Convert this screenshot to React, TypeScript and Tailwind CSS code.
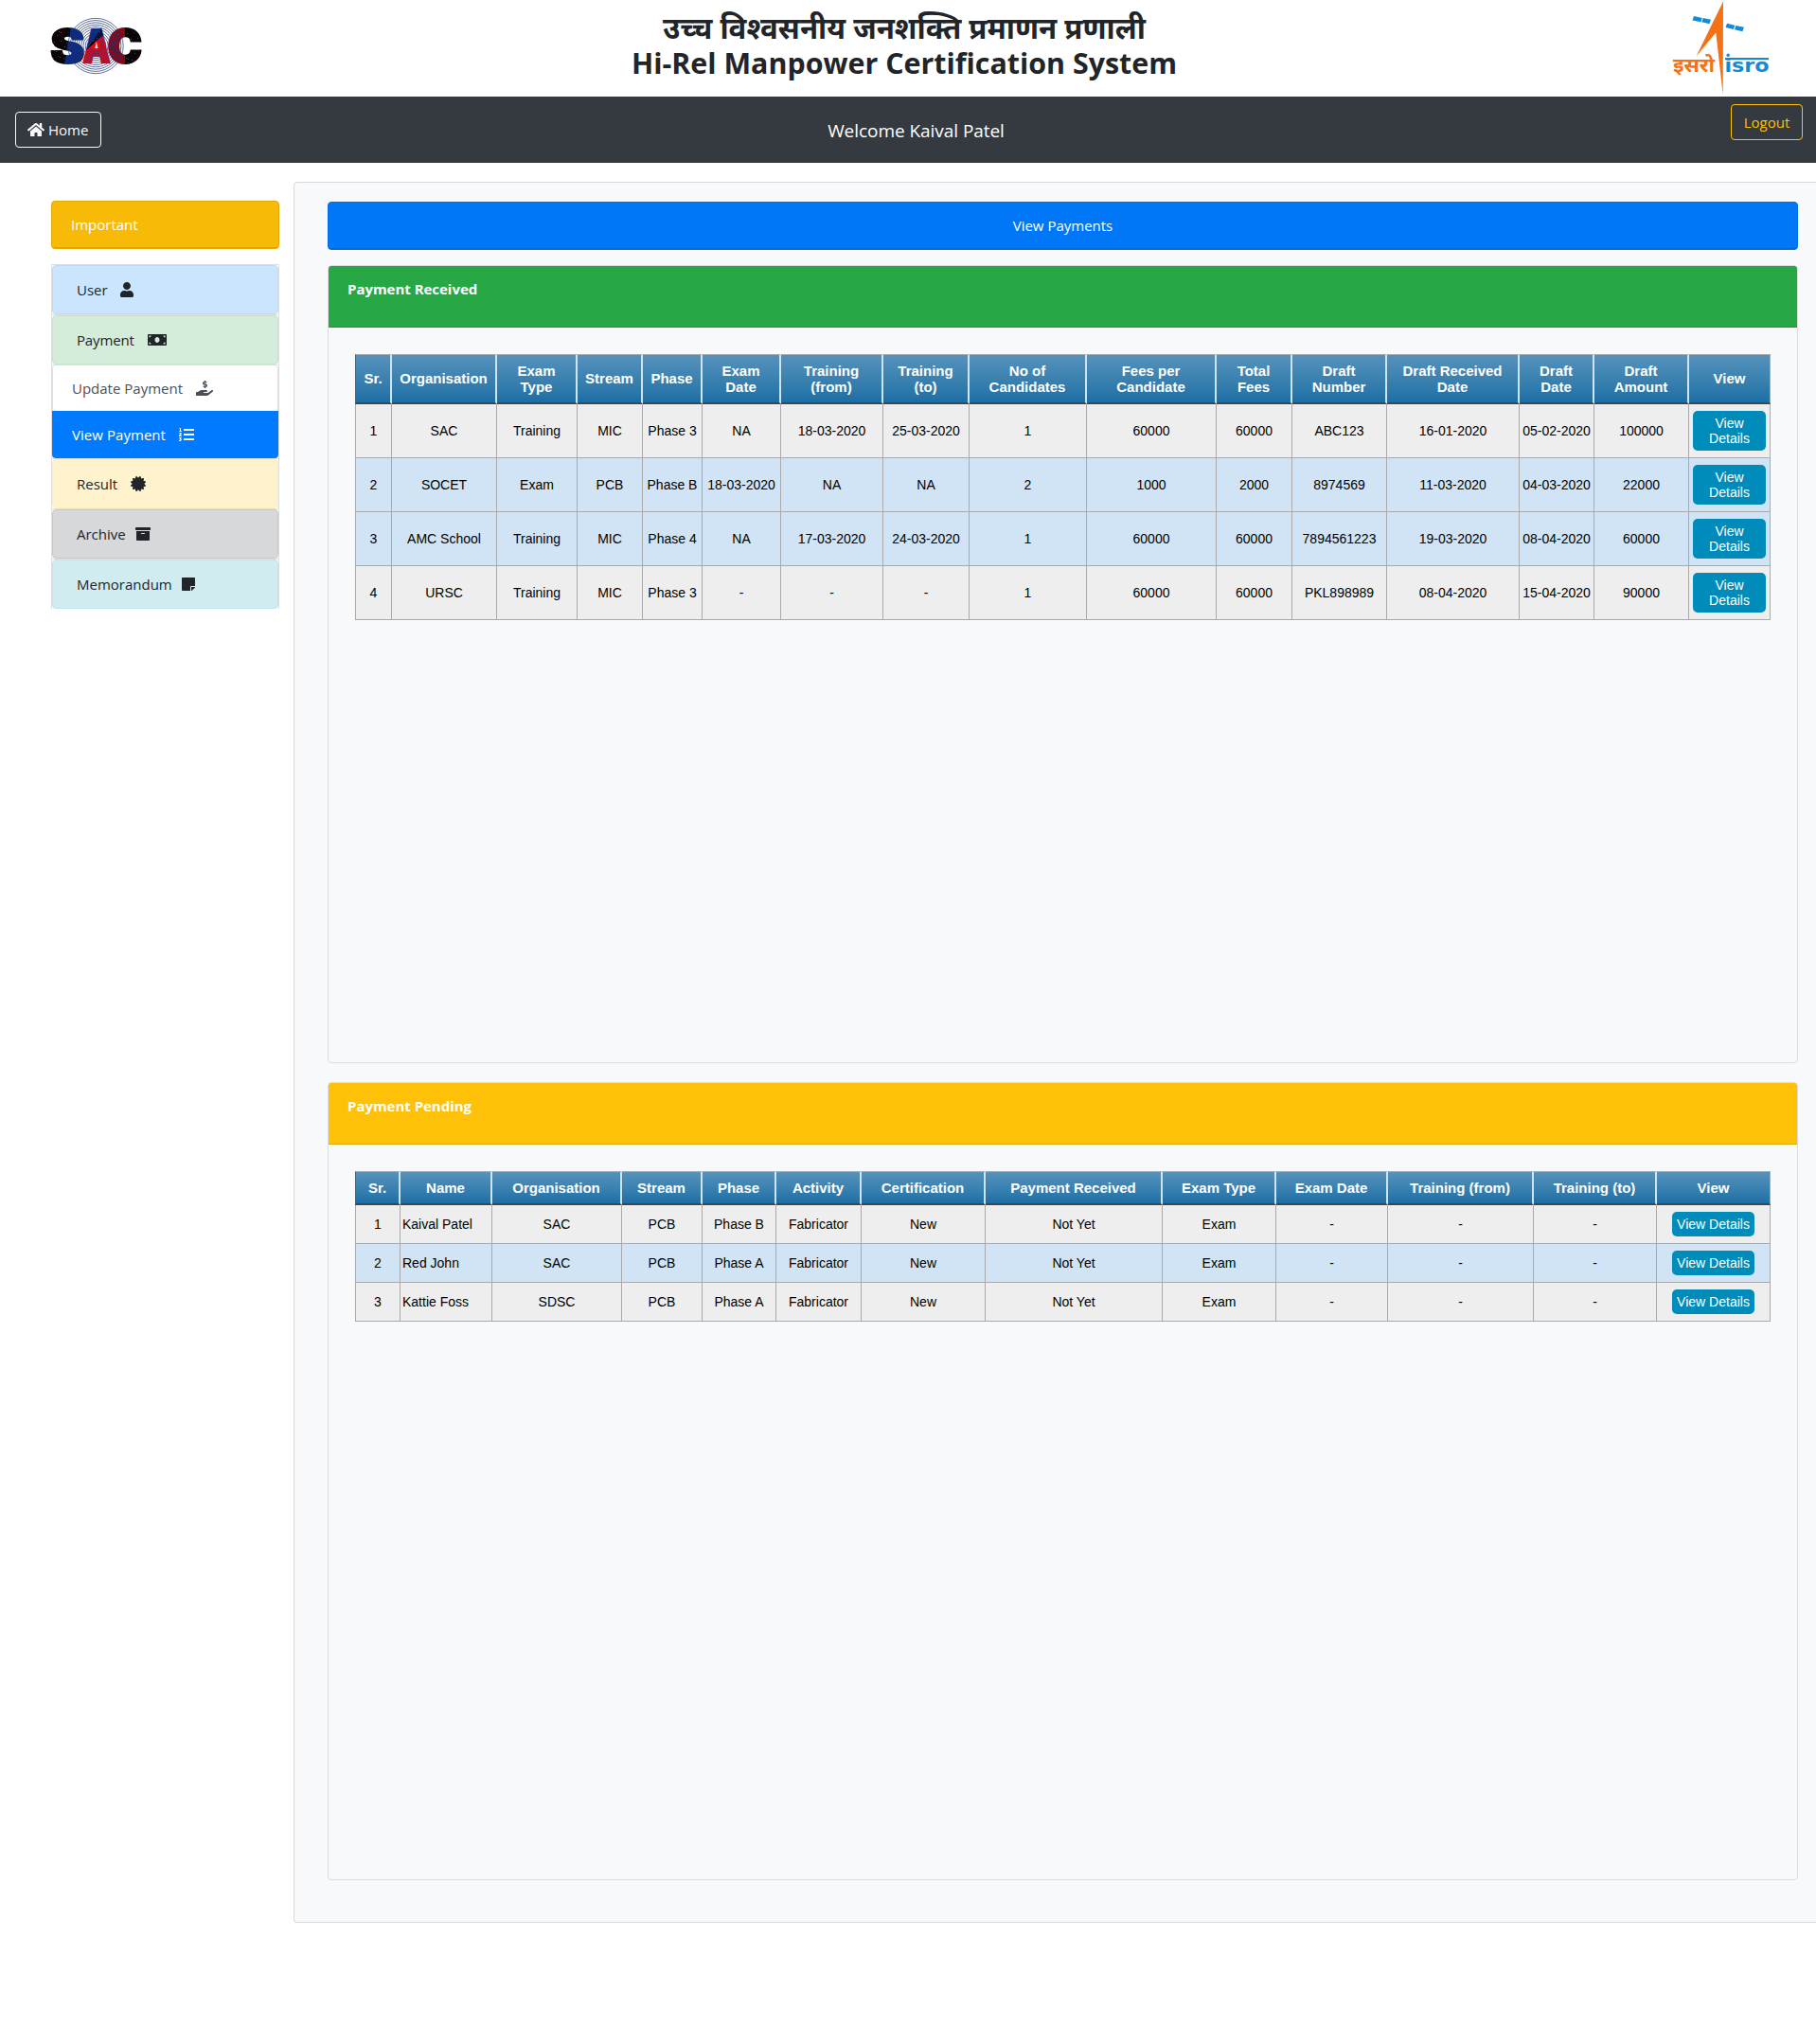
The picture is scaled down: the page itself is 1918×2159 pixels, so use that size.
import { FaHome, FaUser, FaMoneyBill, FaHandHoldingUsd, FaListOl, FaCertificate, FaArchive, FaStickyNote } from "react-icons/fa";
import type { ReactNode } from "react";

const specks = Array.from({ length: 150 }, (_, i) => ({
  x: (i * 37) % 100,
  y: 13 + ((i * 23 + Math.floor(i / 7) * 5) % 39),
  c: ["#8e1a1c", "#2c4a48", "#c0181c", "#262b33", "#3c5a50"][i % 5],
}));

function SacLogo() {
  const radii = [29.2, 26.9, 24.6, 22.3, 20, 17.7, 15.4, 13.1, 10.8, 8.5, 6.2];
  return (
    <svg className="mt-4 h-[66px] w-[100px]" viewBox="0 0 100 66">
      <defs>
        <pattern id="sacFill" width="100" height="66" patternUnits="userSpaceOnUse">
          <rect width="100" height="66" fill="#0a0507" />
          {specks.map((s, i) => (
            <rect key={i} x={s.x} y={s.y} width="1" height="1" fill={s.c} />
          ))}
          <path d="M25 13 L58 13 L40 38 L32 52 L18 52 Z" fill="#0a2f92" fillOpacity="0.9" />
          <path d="M58 22 L40 38 L34 52 L68 52 L60 24 Z" fill="#e0091a" />
          <path d="M62 12 H82 V52 H66 Z" fill="#b00816" fillOpacity="0.75" />
        </pattern>
      </defs>
      <g fontFamily="Inter, sans-serif" fontWeight="900" fontSize="48" strokeWidth="2" fill="url(#sacFill)" stroke="url(#sacFill)">
        <text x="3.200" y="50" textLength="36" lengthAdjust="spacingAndGlyphs">S</text>
        <text x="37.500" y="50" textLength="29" lengthAdjust="spacingAndGlyphs">A</text>
        <text x="63.500" y="50" textLength="36.500" lengthAdjust="spacingAndGlyphs">C</text>
      </g>
      <g fill="none" stroke="#1c3076" strokeWidth="0.7">
        {radii.map((r) => (
          <circle key={r} cx="51" cy="32.500" r={r} />
        ))}
      </g>
    </svg>
  );
}

function IsroLogo() {
  return (
    <svg className="mr-[38px] h-[102px] w-[120px]" viewBox="0 0 120 102">
      <path d="M60 1.500 L31.500 59.500 L52.300 34.500 L59.700 100 Z" fill="#f47216" />
      <g fill="#118bd8">
        <path d="M29 17 L37.800 19 L36.300 23.200 L27.500 21.500Z M38.800 19 L47 20.800 L45.400 25.200 L37.300 23.300Z" />
        <path d="M64 24.800 L72.200 26.700 L71 31 L62.600 29Z M73.300 27 L82 28.800 L80.400 33.200 L72 31.300Z" />
        <rect x="62" y="61" width="46" height="2.200" />
        <circle cx="65.200" cy="58.300" r="1.700" />
      </g>
      <text x="7" y="76" textLength="44" lengthAdjust="spacingAndGlyphs" fontFamily="'Noto Sans Devanagari','Noto Sans',sans-serif" fontWeight="700" fontSize="20" fill="#f47216">इसरो</text>
      <text x="61.500" y="76" textLength="47" lengthAdjust="spacingAndGlyphs" fontFamily="'DejaVu Sans', sans-serif" fontWeight="700" fontSize="19.500" fill="#118bd8">isro</text>
    </svg>
  );
}

function Alert({ className, label, width, icon }: { className: string; label: string; width: string; icon: ReactNode }) {
  return (
    <div className="border-t border-[#dfdfdf]">
      <div className={`flex h-[52px] items-center rounded border pl-[25px] text-[#212529] ${className}`}>
        <span className={width}>{label}</span>
        {icon}
      </div>
    </div>
  );
}

function Sidebar() {
  return (
    <aside className="ml-[54px] mt-10 w-[241px] text-[15px]">
      <div className="mb-4 rounded border border-[#dfa90a] bg-[#f7bb07]">
        <div className="flex h-[49px] items-center border-b border-[#dba60a] pl-5 text-white">Important</div>
      </div>
      <nav className="border-x border-[#dfdfdf]">
        <Alert className="border-[#b8daff] bg-[#cce5ff]" label="User" width="w-[46px]" icon={<FaUser className="h-4 w-3.5" />} />
        <Alert className="border-[#c3e6cb] bg-[#d4edda]" label="Payment" width="w-[75px] tracking-[-0.15px]" icon={<FaMoneyBill className="h-4 w-5" />} />
        <div className="border-t border-[#dfdfdf]">
          <div className="flex h-12 items-center rounded-t border-x border-[#dfdfdf] bg-white pl-5 text-[#495057]">
            <span className="w-[131px]">Update Payment</span>
            <FaHandHoldingUsd className="h-4 w-[18px]" />
          </div>
          <div className="flex h-[50px] items-center rounded-b bg-[#007bff] pl-[21px] text-white">
            <span className="w-[113px] tracking-[0.05px]">View Payment</span>
            <FaListOl className="h-4 w-4" />
          </div>
        </div>
        <Alert className="border-[#ffeeba] bg-[#fff3cd]" label="Result" width="w-[57px]" icon={<FaCertificate className="h-4 w-4" />} />
        <Alert className="border-[#c6c8ca] bg-[#d6d8d9]" label="Archive" width="w-[62px]" icon={<FaArchive className="h-4 w-4" />} />
        <Alert className="border-[#bee5eb] bg-[#d1ecf1]" label="Memorandum" width="w-[111px]" icon={<FaStickyNote className="h-4 w-3.5" />} />
      </nav>
    </aside>
  );
}

interface TableProps {
  widths: number[];
  heads: string[];
  rows: string[][];
  blue: number[];
  headClass: string;
  rowClass: string;
  buttonClass: string;
  leftColumn?: number;
}

function DataTable({ widths, heads, rows, blue, headClass, rowClass, buttonClass, leftColumn }: TableProps) {
  return (
    <table className="w-[1495px] table-fixed border-separate border-spacing-0 bg-[#eeeeee] text-center font-['Liberation_Sans',Arial,sans-serif] text-[14px] leading-4 text-black">
      <colgroup>
        {widths.map((w, i) => (
          <col key={i} style={{ width: w }} />
        ))}
      </colgroup>
      <thead>
        <tr className={headClass}>
          {heads.map((h, i) => (
            <th
              key={i}
              className="whitespace-pre-line border-b-2 border-r-2 border-t border-b-[#444444] border-r-[#d0e4f5] border-t-[#aaaaaa] bg-linear-to-b from-[#5592bb] via-[#327cad] via-66% to-[#1c6ea4] p-0 pb-px text-[15px] font-bold leading-[17px] text-white first:border-l first:border-l-[#1c6ea4] last:border-r last:border-r-[#aaaaaa]"
            >
              {h}
            </th>
          ))}
        </tr>
      </thead>
      <tbody>
        {rows.map((row, r) => (
          <tr key={r} className={`${rowClass} ${blue.includes(r) ? "bg-[#d0e4f5]" : ""}`}>
            {row.map((cell, c) => (
              <td
                key={c}
                className={`whitespace-nowrap border-b border-r border-[#aaaaaa] p-0 first:border-l ${c === leftColumn ? "pl-0.5 text-left" : ""}`}
              >
                {cell}
              </td>
            ))}
            <td className="border-b border-r border-[#aaaaaa] p-0">
              <button className={`block rounded-[5px] bg-[#008cba] text-white ${buttonClass}`}>View Details</button>
            </td>
          </tr>
        ))}
      </tbody>
    </table>
  );
}

const receivedHeads = [
  "Sr.", "Organisation", "Exam\nType", "Stream", "Phase", "Exam\nDate", "Training\n(from)", "Training\n(to)",
  "No of\nCandidates", "Fees per\nCandidate", "Total\nFees", "Draft\nNumber", "Draft Received\nDate", "Draft\nDate", "Draft\nAmount", "View",
];
const receivedWidths = [39, 111, 85, 69, 63, 83, 108, 91, 124, 137, 80, 100, 140, 79, 100, 86];
const receivedRows = [
  ["1", "SAC", "Training", "MIC", "Phase 3", "NA", "18-03-2020", "25-03-2020", "1", "60000", "60000", "ABC123", "16-01-2020", "05-02-2020", "100000"],
  ["2", "SOCET", "Exam", "PCB", "Phase B", "18-03-2020", "NA", "NA", "2", "1000", "2000", "8974569", "11-03-2020", "04-03-2020", "22000"],
  ["3", "AMC School", "Training", "MIC", "Phase 4", "NA", "17-03-2020", "24-03-2020", "1", "60000", "60000", "7894561223", "19-03-2020", "08-04-2020", "60000"],
  ["4", "URSC", "Training", "MIC", "Phase 3", "-", "-", "-", "1", "60000", "60000", "PKL898989", "08-04-2020", "15-04-2020", "90000"],
];

const pendingHeads = [
  "Sr.", "Name", "Organisation", "Stream", "Phase", "Activity", "Certification", "Payment Received", "Exam Type", "Exam Date", "Training (from)", "Training (to)", "View",
];
const pendingWidths = [48, 97, 137, 85, 78, 90, 131, 187, 120, 118, 154, 130, 120];
const pendingRows = [
  ["1", "Kaival Patel", "SAC", "PCB", "Phase B", "Fabricator", "New", "Not Yet", "Exam", "-", "-", "-"],
  ["2", "Red John", "SAC", "PCB", "Phase A", "Fabricator", "New", "Not Yet", "Exam", "-", "-", "-"],
  ["3", "Kattie Foss", "SDSC", "PCB", "Phase A", "Fabricator", "New", "Not Yet", "Exam", "-", "-", "-"],
];

function Card({ title, headClass, children }: { title: string; headClass: string; children: ReactNode }) {
  return (
    <section className="h-[843px] overflow-hidden rounded border border-[#dcdddf]">
      <div className={`h-[65px] border-b pl-5 pt-3 text-[15px] font-bold leading-6 tracking-[-0.03px] text-white ${headClass}`}>{title}</div>
      <div className="pl-7 pt-7">{children}</div>
    </section>
  );
}

export default function App() {
  return (
    <div className="h-[2159px] w-[1918px] overflow-hidden bg-white font-['Open_Sans','Noto_Sans',sans-serif]">
      <header className="flex h-[102px] pl-[50px]">
        <SacLogo />
        <h1 className="flex-1 pt-2.5 text-center font-bold leading-[38px] text-[#212529]">
          <span className="block h-[38px] text-[31.2px]">उच्च विश्वसनीय जनशक्ति प्रमाणन प्रणाली</span>
          <span className="block h-[38px] text-[30.4px]">Hi-Rel Manpower Certification System</span>
        </h1>
        <IsroLogo />
      </header>
      <div className="flex h-[70px] items-start bg-[#343a40] pl-4 pr-3.5">
        <button className="mt-4 flex h-[38px] w-[91px] items-center rounded border border-[#f8f9fa] pl-3 text-[15px] text-[#f8f9fa]">
          <FaHome className="mr-1 h-4 w-[18px]" />
          Home
        </button>
        <div className="flex-1 pt-[21px] text-center text-[19px] leading-[30px] tracking-[-0.05px] text-white">Welcome Kaival Patel</div>
        <button className="mt-2 h-[38px] w-[76px] rounded border border-[#ffc107] text-[15px] text-[#ffc107]">Logout</button>
      </div>
      <div className="flex items-start">
        <Sidebar />
        <main className="ml-[15px] mt-5 h-[1839px] flex-1 rounded-l border border-r-0 border-[#d8d9db] bg-[#f8f9fb] pl-[35px] pr-[19px] pt-5">
          <div className="mb-4 rounded border border-[#006fe6] bg-[#0077f7]">
            <div className="flex h-[49px] items-center justify-center border-b border-[#0069d9] text-[15px] text-white">View Payments</div>
          </div>
          <div className="flex flex-col gap-5">
            <Card title="Payment Received" headClass="border-[#23923d] bg-[#28a745]">
              <DataTable
                widths={receivedWidths}
                heads={receivedHeads}
                rows={receivedRows}
                blue={[1, 2]}
                headClass="h-[53px]"
                rowClass="h-[57px]"
                buttonClass="ml-1 h-[42px] w-[77px] px-4"
              />
            </Card>
            <Card title="Payment Pending" headClass="border-[#dfa90a] bg-[#ffc107]">
              <DataTable
                widths={pendingWidths}
                heads={pendingHeads}
                rows={pendingRows}
                blue={[1]}
                headClass="h-[36px]"
                rowClass="h-[41px]"
                buttonClass="mx-auto h-[26px] w-[87px]"
                leftColumn={1}
              />
            </Card>
          </div>
        </main>
      </div>
    </div>
  );
}
